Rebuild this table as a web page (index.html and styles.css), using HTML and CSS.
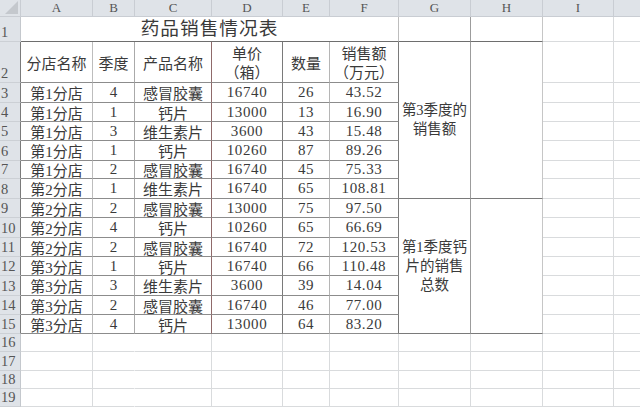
FILE: index.html
```html
<!DOCTYPE html>
<html lang="zh-CN">
<head>
<meta charset="utf-8">
<title>药品销售情况表</title>
<link rel="stylesheet" href="styles.css">
</head>
<body>
<div class="sheet">
  <div class="ch corner"><svg width="13" height="13" viewBox="0 0 13 13"><polygon points="0,13 13,13 13,0" fill="#c4c8cd"/></svg></div>
  <div class="ch">A</div><div class="ch">B</div><div class="ch">C</div><div class="ch">D</div><div class="ch">E</div><div class="ch">F</div><div class="ch">G</div><div class="ch">H</div><div class="ch">I</div><div class="ch end"></div>

  <div class="rh">1</div><div class="title">药品销售情况表</div><div class="g1"></div><div class="h1c"></div><div class="i"></div><div class="j"></div>

  <div class="rh tb">2</div><div class="td a">分店名称</div><div class="td b">季度</div><div class="td c">产品名称</div><div class="td d two"><span class="ln">单价</span><span class="ln">（箱）</span></div><div class="td e">数量</div><div class="td f two"><span class="ln">销售额</span><span class="ln">（万元）</span></div><div class="gm">第3季度的<br>销售额</div><div class="hm"></div><div class="i"></div><div class="j"></div>

  <div class="rh tb">3</div><div class="td a">第1分店</div><div class="td b">4</div><div class="td c">感冒胶囊</div><div class="td d n">16740</div><div class="td e n">26</div><div class="td f n">43.52</div><div class="i"></div><div class="j"></div>
  <div class="rh tb">4</div><div class="td a">第1分店</div><div class="td b">1</div><div class="td c">钙片</div><div class="td d n">13000</div><div class="td e n">13</div><div class="td f n">16.90</div><div class="i"></div><div class="j"></div>
  <div class="rh tb">5</div><div class="td a">第1分店</div><div class="td b">3</div><div class="td c">维生素片</div><div class="td d n">3600</div><div class="td e n">43</div><div class="td f n">15.48</div><div class="i"></div><div class="j"></div>
  <div class="rh tb">6</div><div class="td a">第1分店</div><div class="td b">1</div><div class="td c">钙片</div><div class="td d n">10260</div><div class="td e n">87</div><div class="td f n">89.26</div><div class="i"></div><div class="j"></div>
  <div class="rh tb">7</div><div class="td a">第1分店</div><div class="td b">2</div><div class="td c">感冒胶囊</div><div class="td d n">16740</div><div class="td e n">45</div><div class="td f n">75.33</div><div class="i"></div><div class="j"></div>
  <div class="rh tb">8</div><div class="td a">第2分店</div><div class="td b">1</div><div class="td c">维生素片</div><div class="td d n">16740</div><div class="td e n">65</div><div class="td f n">108.81</div><div class="i"></div><div class="j"></div>

  <div class="rh tb">9</div><div class="td a">第2分店</div><div class="td b">2</div><div class="td c">感冒胶囊</div><div class="td d n">13000</div><div class="td e n">75</div><div class="td f n">97.50</div><div class="gm">第1季度钙<br>片的销售<br>总数</div><div class="hm"></div><div class="i"></div><div class="j"></div>
  <div class="rh tb">10</div><div class="td a">第2分店</div><div class="td b">4</div><div class="td c">钙片</div><div class="td d n">10260</div><div class="td e n">65</div><div class="td f n">66.69</div><div class="i"></div><div class="j"></div>
  <div class="rh tb">11</div><div class="td a">第2分店</div><div class="td b">2</div><div class="td c">感冒胶囊</div><div class="td d n">16740</div><div class="td e n">72</div><div class="td f n">120.53</div><div class="i"></div><div class="j"></div>
  <div class="rh tb">12</div><div class="td a">第3分店</div><div class="td b">1</div><div class="td c">钙片</div><div class="td d n">16740</div><div class="td e n">66</div><div class="td f n">110.48</div><div class="i"></div><div class="j"></div>
  <div class="rh tb">13</div><div class="td a">第3分店</div><div class="td b">3</div><div class="td c">维生素片</div><div class="td d n">3600</div><div class="td e n">39</div><div class="td f n">14.04</div><div class="i"></div><div class="j"></div>
  <div class="rh tb">14</div><div class="td a">第3分店</div><div class="td b">2</div><div class="td c">感冒胶囊</div><div class="td d n">16740</div><div class="td e n">46</div><div class="td f n">77.00</div><div class="i"></div><div class="j"></div>
  <div class="rh tb">15</div><div class="td a">第3分店</div><div class="td b">4</div><div class="td c">钙片</div><div class="td d n">13000</div><div class="td e n">64</div><div class="td f n">83.20</div><div class="i"></div><div class="j"></div>

  <div class="rh">16</div><div class="i"></div><div class="i nb"></div><div class="i"></div><div class="i"></div><div class="i"></div><div class="i"></div><div class="i"></div><div class="i"></div><div class="i"></div><div class="j"></div>
  <div class="rh">17</div><div class="i"></div><div class="i nb"></div><div class="i"></div><div class="i"></div><div class="i"></div><div class="i"></div><div class="i"></div><div class="i"></div><div class="i"></div><div class="j"></div>
  <div class="rh">18</div><div class="i"></div><div class="i nb"></div><div class="i"></div><div class="i"></div><div class="i"></div><div class="i"></div><div class="i"></div><div class="i"></div><div class="i"></div><div class="j"></div>
  <div class="rh">19</div><div class="i"></div><div class="i nb"></div><div class="i"></div><div class="i"></div><div class="i"></div><div class="i"></div><div class="i"></div><div class="i"></div><div class="i"></div><div class="j"></div>
</div>
</body>
</html>
```
FILE: styles.css
```css
html, body {
  margin: 0;
  padding: 0;
  background: #fff;
  overflow: hidden;
}

body {
  font-family: "Liberation Serif", "Noto Sans CJK SC", serif;
  color: #3a3a3a;
}

.sheet {
  display: grid;
  width: 640px;
  height: 408px;
  grid-template-columns: 21px 72px 42px 77px 71px 47px 69px 72px 72px 71px 1fr;
  grid-template-rows: 17px 25px 41px 20px 19px 19px 20px 18px 20px 19px 20px 19px 19px 20px 19px 19px 18px 19px 18px 18px;
}

.sheet > div {
  box-sizing: border-box;
  display: flex;
  align-items: center;
  justify-content: center;
  overflow: hidden;
  white-space: nowrap;
}

/* column headers */
.ch {
  background: #dfe3e8;
  border-right: 1px solid #c9cdd3;
  border-bottom: 1px solid #c9cdd3;
  font-size: 13px;
  color: #555;
}
.ch.corner {
  justify-content: flex-end;
  align-items: flex-end;
  padding: 0 2px 2px 0;
}
.ch.end {
  border-right: none;
}

/* row headers */
.rh {
  background: #dfe3e8;
  border-bottom: 1px solid #ccd0d5;
  border-right: 1px solid #c4c8cd;
  font-size: 14.5px;
  color: #555;
  line-height: 1;
  padding: 0 0 2px 1px;
}
.sheet > .rh {
  justify-content: flex-start;
  align-items: flex-end;
}
.rh.tb {
  border-right-color: #7a7a7a;
}

/* title row */
.title {
  grid-column: span 6;
  font-size: 18.67px;
  letter-spacing: 1px;
  border-bottom: 1px solid #6e6e6e;
  border-right: 1px solid #bdbdbd;
}
.sheet > .title {
  align-items: flex-end;
  padding-bottom: 1px;
}
.g1 {
  border-bottom: 1px solid #6e6e6e;
  border-right: 1px solid #9c9c9c;
}
.h1c {
  border-bottom: 1px solid #6e6e6e;
  border-right: 1px solid #c6c6c6;
}

/* table cells */
.td {
  font-size: 15px;
  border-bottom: 1px solid #8c8c8c;
}
.td.a { border-right: 1px solid #bdbdbd; }
.td.b { border-right: 1px solid #aaaaaa; }
.td.c { border-right: 1px solid #8f6a6a; }
.td.d { border-right: 1px solid #7a7a7a; }
.td.e { border-right: 1px solid #b5b5b5; }
.td.f { border-right: 1px solid #7a7a7a; }

.td.n {
  letter-spacing: 0.6px;
}

.sheet > .two {
  flex-direction: column;
  font-family: "Noto Sans CJK SC", sans-serif;
  line-height: 19px;
}
.ln {
  display: block;
  text-align: center;
  text-spacing-trim: space-all;
  font-feature-settings: "fwid" 1;
}

/* merged G / H blocks */
.gm {
  grid-row: span 7;
  font-size: 14.5px;
  line-height: 19px;
  border-right: 1px solid #9c9c9c;
  border-bottom: 1px solid #7a7a7a;
}
.sheet > .gm {
  text-align: center;
  white-space: normal;
}
.hm {
  grid-row: span 7;
  border-right: 1px solid #c6c6c6;
  border-bottom: 1px solid #7a7a7a;
}

/* plain gridline cells */
.i {
  border-right: 1px solid #d9dbdd;
  border-bottom: 1px solid #d9dbdd;
}
.i.nb {
  border-right-color: transparent;
}
.j {
  border-bottom: 1px solid #d9dbdd;
}
```
